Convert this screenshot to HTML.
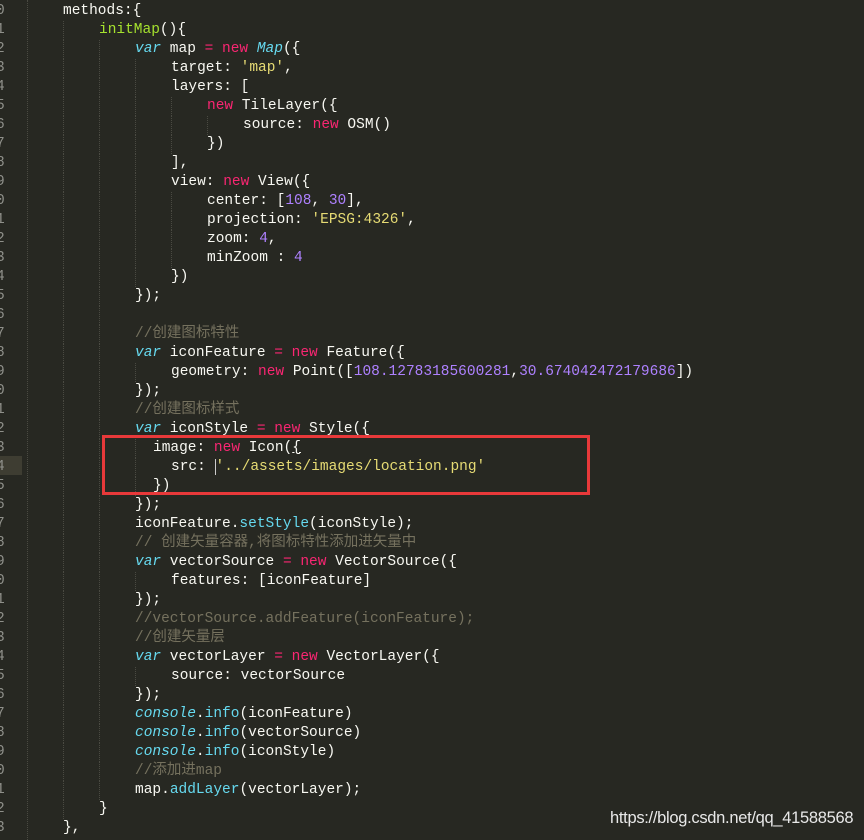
<!DOCTYPE html><html><head><meta charset="utf-8"><style>
body{margin:0;width:864px;height:840px;background:#272822;overflow:hidden;position:relative;font-family:"Liberation Mono","Noto Sans CJK SC",monospace;font-size:14.5px;color:#f8f8f2}
.l{position:absolute;height:19px;line-height:19px;white-space:pre}
.n{position:absolute;left:-4px;width:10px;color:#8f908a;height:19px;line-height:19px}
.k{color:#f92672}.f{color:#a6e22e}.c{color:#66d9ef;font-style:italic}.b{color:#66d9ef}.s{color:#e6db74}.m{color:#ae81ff}.cm{color:#75715e}
.g{position:absolute;width:0;border-left:1px dotted #4a4a42}
.box{position:absolute;left:102px;top:435px;width:482px;height:54px;border:3px solid #e8393a}
.wm{position:absolute;left:610px;top:809px;font-family:"Liberation Sans",sans-serif;font-size:16.5px;color:#e8e8e8;letter-spacing:-0.3px}
</style></head><body>
<div style="position:absolute;left:0;top:456px;width:22px;height:19px;background:#3e3d32"></div>
<div id="c"></div>
<div class="box"></div>
<div class="wm">https://blog.csdn.net/qq_41588568</div>
<script>
var L=[
[1,'methods:{'],
[2,'<span class="f">initMap</span>(){'],
[3,'<span class="c">var</span> map <span class="k">=</span> <span class="k">new</span> <span class="c">Map</span>({'],
[4,'target: <span class="s">\'map\'</span>,'],
[4,'layers: ['],
[5,'<span class="k">new</span> TileLayer({'],
[6,'source: <span class="k">new</span> OSM()'],
[5,'})'],
[4,'],'],
[4,'view: <span class="k">new</span> View({'],
[5,'center: [<span class="m">108</span>, <span class="m">30</span>],'],
[5,'projection: <span class="s">\'EPSG:4326\'</span>,'],
[5,'zoom: <span class="m">4</span>,'],
[5,'minZoom : <span class="m">4</span>'],
[4,'})'],
[3,'});'],
[3,''],
[3,'<span class="cm">//创建图标特性</span>'],
[3,'<span class="c">var</span> iconFeature <span class="k">=</span> <span class="k">new</span> Feature({'],
[4,'geometry: <span class="k">new</span> Point([<span class="m">108.12783185600281</span>,<span class="m">30.674042472179686</span>])'],
[3,'});'],
[3,'<span class="cm">//创建图标样式</span>'],
[3,'<span class="c">var</span> iconStyle <span class="k">=</span> <span class="k">new</span> Style({'],
[3.5,'image: <span class="k">new</span> Icon(<u>{</u>'],
[4,'src: <span style="border-left:1px solid #ccc"></span><span class="s">\'../assets/images/location.png\'</span>'],
[3.5,'})'],
[3,'});'],
[3,'iconFeature.<span class="b">setStyle</span>(iconStyle);'],
[3,'<span class="cm">// 创建矢量容器,将图标特性添加进矢量中</span>'],
[3,'<span class="c">var</span> vectorSource <span class="k">=</span> <span class="k">new</span> VectorSource({'],
[4,'features: [iconFeature]'],
[3,'});'],
[3,'<span class="cm">//vectorSource.addFeature(iconFeature);</span>'],
[3,'<span class="cm">//创建矢量层</span>'],
[3,'<span class="c">var</span> vectorLayer <span class="k">=</span> <span class="k">new</span> VectorLayer({'],
[4,'source: vectorSource'],
[3,'});'],
[3,'<span class="c">console</span>.<span class="b">info</span>(iconFeature)'],
[3,'<span class="c">console</span>.<span class="b">info</span>(vectorSource)'],
[3,'<span class="c">console</span>.<span class="b">info</span>(iconStyle)'],
[3,'<span class="cm">//添加进map</span>'],
[3,'map.<span class="b">addLayer</span>(vectorLayer);'],
[2,'}'],
[1,'},']
];
var h='';
L.forEach(function(a,i){
 var t=2+i*19;
 h+='<div class="n" style="top:'+t+'px">'+(i%10)+'</div>';
 h+='<div class="l" style="top:'+t+'px;left:'+(27+36*a[0])+'px">'+a[1]+'</div>';
 for(var g=1;g<a[0];g++){h+='<div class="g" style="left:'+(27+36*g)+'px;top:'+(t)+'px;height:19px"></div>';}
});
h+='<div class="g" style="left:27px;top:0;height:840px"></div>';
document.getElementById('c').innerHTML=h;
</script>
</body></html>
